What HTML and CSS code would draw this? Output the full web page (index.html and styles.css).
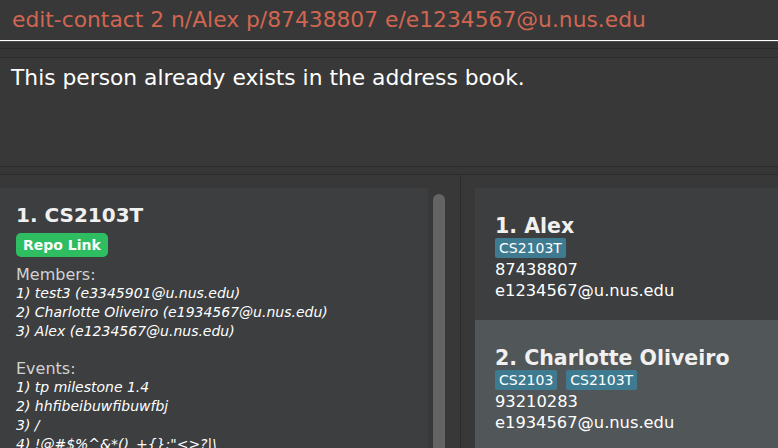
FILE: index.html
```html
<!DOCTYPE html>
<html>
<head>
<meta charset="utf-8">
<link rel="stylesheet" href="styles.css">
</head>
<body>
<div class="app">
  <div class="cmd">edit-contact 2 n/Alex p/87438807 e/e1234567@u.nus.edu</div>
  <div class="sep sep-top"></div>
  <div class="result">This person already exists in the address book.</div>
  <div class="sep sep-mid"></div>
  <div class="main">
    <div class="left">
      <div class="left-scroll">
        <div class="group-card">
          <div class="title">1. CS2103T</div>
          <span class="repo">Repo Link</span>
          <div class="label">Members:</div>
          <div class="item">1) test3 (e3345901@u.nus.edu)</div>
          <div class="item">2) Charlotte Oliveiro (e1934567@u.nus.edu)</div>
          <div class="item">3) Alex (e1234567@u.nus.edu)</div>
          <div class="item blank">&nbsp;</div>
          <div class="label after-blank">Events:</div>
          <div class="item">1) tp milestone 1.4</div>
          <div class="item">2) hhfibeibuwfibuwfbj</div>
          <div class="item">3) /</div>
          <div class="item">4) !@#$%^&amp;*()_+{}:"&lt;&gt;?|\</div>
        </div>
        <div class="scrollbar"><div class="thumb"></div></div>
      </div>
    </div>
    <div class="right">
      <div class="person even">
        <div class="title">1. Alex</div>
        <div class="tags"><span class="tag">CS2103T</span></div>
        <div class="field">87438807</div>
        <div class="field">e1234567@u.nus.edu</div>
      </div>
      <div class="person odd">
        <div class="title">2. Charlotte Oliveiro</div>
        <div class="tags"><span class="tag">CS2103</span><span class="tag">CS2103T</span></div>
        <div class="field">93210283</div>
        <div class="field">e1934567@u.nus.edu</div>
      </div>
    </div>
  </div>
</div>
</body>
</html>
```
FILE: styles.css
```css
html, body {
  margin: 0;
  padding: 0;
  width: 778px;
  height: 448px;
  overflow: hidden;
  background: #383838;
  font-family: "DejaVu Sans", Verdana, sans-serif;
}
.app {
  display: flex;
  flex-direction: column;
  height: 448px;
}
.cmd {
  height: 41px;
  box-sizing: border-box;
  padding: 7px 0 0 12px;
  font-size: 21.8px;
  line-height: 26px;
  color: #d06651;
  background: #383838;
  border-bottom: 1px solid #ffffff;
  white-space: nowrap;
}
.sep {
  background: #353535;
  box-sizing: border-box;
}
.sep-top {
  height: 17px;
  border-top: 1px solid #4a4a4a;
  background: linear-gradient(#333 0, #333 6px, #2a2a2a 6px, #2a2a2a 7px, #363636 7px);
  border-bottom: 1px solid #2b2b2b;
}
.result {
  height: 108px;
  box-sizing: border-box;
  padding: 7px 0 0 11px;
  font-size: 21.8px;
  line-height: 26px;
  color: #ffffff;
  background: #383838;
}
.sep-mid {
  height: 9px;
  border-top: 1px solid #2b2b2b;
  border-bottom: 1px solid #2b2b2b;
  background: #363636;
}
.main {
  flex: 1;
  display: flex;
  min-height: 0;
  background: #383838;
}
.left {
  width: 461px;
  box-sizing: border-box;
  padding-top: 13px;
  border-right: 1px solid #2b2b2b;
  overflow: hidden;
}
.left-scroll {
  display: flex;
  height: 100%;
}
.group-card {
  width: 428px;
  flex-shrink: 0;
  box-sizing: border-box;
  background: #3c3e3f;
  padding: 15px 0 0 16px;
  color: #ffffff;
}
.title {
  font-size: 20px;
  font-weight: bold;
  color: #f0f0f0;
  line-height: 24px;
}
.repo {
  display: inline-block;
  margin-top: 6px;
  background: #2fbd62;
  color: #ffffff;
  font-weight: bold;
  font-size: 14px;
  line-height: 24px;
  padding: 0 7px;
  border-radius: 5px;
}
.label {
  font-size: 16px;
  color: #d2d2d2;
  line-height: 19px;
  margin-top: 8px;
}
.label.after-blank {
  margin-top: -1px;
}
.item {
  font-size: 14px;
  font-style: italic;
  color: #ffffff;
  line-height: 19px;
}
.scrollbar {
  width: 33px;
  display: flex;
  padding-left: 5px;
  box-sizing: border-box;
  background: #383838;
}
.thumb {
  width: 12px;
  height: 100%;
  margin-top: 6px;
  border-radius: 6px;
  background: #646464;
}
.right {
  flex: 1;
  padding: 13px 0 0 14px;
  box-sizing: border-box;
  display: flex;
  flex-direction: column;
  overflow: hidden;
}
.person {
  padding: 27px 0 0 20px;
  box-sizing: border-box;
  height: 132px;
  flex-shrink: 0;
}
.person.even {
  background: #3c3e3f;
}
.person.odd {
  background: #515658;
}
.person .title {
  font-size: 20.5px;
  line-height: 23px;
}
.tags {
  display: flex;
  gap: 9px;
}
.tag {
  background: #3e7b91;
  color: #ffffff;
  font-size: 14px;
  line-height: 20px;
  padding: 0 4px;
  border-radius: 2px;
}
.field {
  font-size: 16.3px;
  color: #ffffff;
  line-height: 21px;
}
.tags + .field {
  margin-top: 1px;
}
```
